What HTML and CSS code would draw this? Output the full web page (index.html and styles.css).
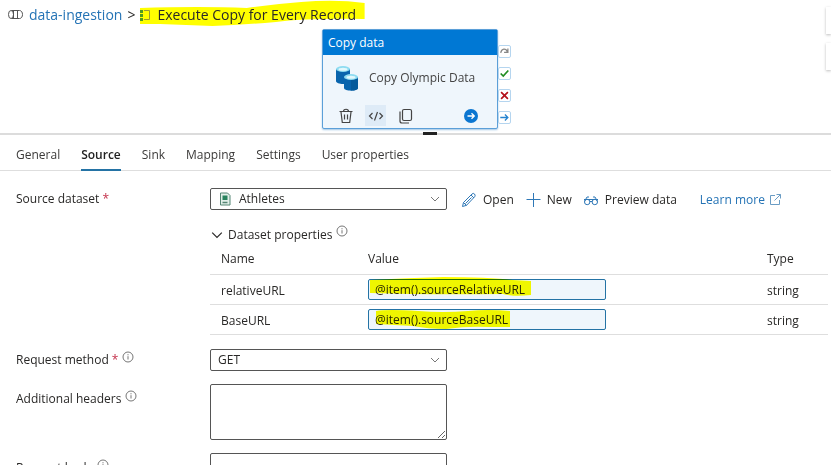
FILE: index.html
```html
<!DOCTYPE html>
<html lang="en">
<head>
<meta charset="utf-8">
<meta name="viewport" content="width=device-width, initial-scale=1">
<title>data-ingestion</title>
<link rel="stylesheet" href="styles.css">
</head>
<body>
<svg class="sprite" aria-hidden="true">
  <symbol id="chevron" viewBox="0 0 10 10"><path d="M1 3l4 4 4-4" fill="none" stroke="currentColor"/></symbol>
  <symbol id="info" viewBox="0 0 12 12"><circle cx="6" cy="6" r="5" fill="none" stroke="#666" stroke-width=".9"/><path d="M6 5.200v3.300M6 3.200v1.100" stroke="#666" stroke-width=".9"/></symbol>
</svg>

<section class="canvas">
  <nav class="breadcrumb" aria-label="Breadcrumb">
    <svg class="crumb-icon" width="15" height="12" viewBox="0 0 15 12" fill="none" stroke="#555"><path d="M3.500 1.500h8c4 0 4 8 0 8h-8M5.500 1.500v8M9.500 1.500v8"/><ellipse cx="3" cy="5.500" rx="2.500" ry="4"/></svg>
    <a href="#pipeline">data-ingestion</a>
    <span class="separator">&gt;</span>
    <span class="current">
      <svg class="marker" viewBox="0 0 224 26" preserveAspectRatio="none" aria-hidden="true"><path d="M0 8Q60 6 106 8Q134 4 160 2Q195-1 223 3V19Q165 18 135 22Q100 25 72 26L20 24H0z" fill="#ff0"/></svg>
      <svg class="loop-icon" width="11" height="13" viewBox="0 0 11 13"><path d="M4 1.500h5.500v9H4" fill="none" stroke="#999a35"/><path d="M0 1h3v3H0zM0 5h3v3H0zM0 9h3v3H0z" fill="#4f9a21"/></svg>
      <span class="current-label">Execute Copy for Every Record</span>
    </span>
  </nav>

  <article class="activity">
    <header class="activity-type">Copy data</header>
    <div class="activity-main">
      <svg width="24" height="26" viewBox="0 0 24 26"><path d="M1 4v12c0 4 14 4 14 0V4z" fill="#0864ad"/><ellipse cx="8" cy="4" rx="7" ry="3" fill="#8edcf1"/><ellipse cx="8" cy="4.200" rx="4.500" ry="1.500" fill="#e2f8fc"/><path d="M9 12v11c0 3.500 14 3.500 14 0V12z" fill="#0864ad"/><path d="M16 14h7v9c0 1.500-3 2.600-7 2.600z" fill="#055a9b"/><ellipse cx="16" cy="12" rx="7" ry="3" fill="#8edcf1"/><ellipse cx="16" cy="12.200" rx="4.500" ry="1.500" fill="#e2f8fc"/></svg>
      <span>Copy Olympic Data</span>
    </div>
    <div class="activity-actions">
      <button type="button" aria-label="Delete"><svg width="16" height="16" viewBox="0 0 16 16" fill="none" stroke="#444" stroke-width="1.200"><path d="M1.500 3.500h13M5.500 3.500C5.500.5 10.500.5 10.500 3.500M3 4l1.300 10.500h7.400L13 4M6.500 6.500v5M9.500 6.500v5"/></svg></button>
      <button type="button" class="code" aria-label="Code"><svg width="16" height="16" viewBox="0 0 16 16" fill="none" stroke="#444" stroke-width="1.200"><path d="M4.500 5L1.500 8l3 3M11.500 5l3 3-3 3M9.500 4l-3 8.500"/></svg></button>
      <button type="button" aria-label="Clone"><svg width="16" height="16" viewBox="0 0 16 16" fill="none" stroke="#444" stroke-width="1.200"><rect x="4.500" y="1.500" width="9" height="11" rx="1.500"/><path d="M2 3.500V13q0 2 2 2h7"/></svg></button>
      <button type="button" class="run" aria-label="Add output"><svg width="16" height="16" viewBox="0 0 16 16"><circle cx="8" cy="8" r="7" fill="#0b76d1"/><path d="M4.500 8h6.500M8.500 5.200L11.300 8l-2.800 2.800" fill="none" stroke="#fff" stroke-width="1.300"/></svg></button>
    </div>
    <div class="ports">
      <svg viewBox="0 0 13 13"><path d="M2 8C3 3 8 2 10 7M10.500 3v4.500H6" fill="none" stroke="#888" stroke-width="1.500"/></svg>
      <svg viewBox="0 0 13 13"><path d="M2 6.500l3 3 6-6.500" fill="none" stroke="#218c21" stroke-width="2"/></svg>
      <svg viewBox="0 0 13 13"><path d="M2.500 2.500l8 8M10.500 2.500l-8 8" fill="none" stroke="#b5121b" stroke-width="2"/></svg>
      <svg viewBox="0 0 13 13"><path d="M1.500 6.500h9M7 3l3.500 3.500L7 10" fill="none" stroke="#2583cf" stroke-width="1.500"/></svg>
    </div>
  </article>

  <div class="canvas-tools"><span></span><span></span></div>
  <div class="grip"></div>
</section>

<nav class="tabs" aria-label="Activity settings">
  <a href="#general">General</a>
  <a href="#source" class="active" aria-current="page">Source</a>
  <a href="#sink">Sink</a>
  <a href="#mapping">Mapping</a>
  <a href="#settings">Settings</a>
  <a href="#user">User properties</a>
</nav>

<form class="settings">
  <div class="row">
    <label for="dataset">Source dataset <span class="required">*</span></label>
    <div class="dataset-line">
      <div class="picker with-icon">
        <svg class="file-icon" width="12" height="14" viewBox="0 0 12 14"><path d="M1.500 1h7L11 3.500V13H1.500z" fill="#e2efe9" stroke="#558674"/><rect x="3.500" y="3.500" width="5" height="4.500" fill="#28835e"/><path d="M3.500 10.500h5" stroke="#558674" stroke-width="1.500"/></svg>
        <select id="dataset"><option>Athletes</option></select>
        <svg class="chevron"><use href="#chevron"/></svg>
      </div>
      <div class="commands">
        <button type="button"><svg width="16" height="16" viewBox="0 0 16 16" fill="none" stroke="#2f78b7"><path d="M1.500 14.500l1-4L11 2q1.300-1.300 2.500 0t.2 2.700L5.500 13.300zM10 3l3 3M2.500 10.500l3 3M4.500 11.500l6-6"/></svg>Open</button>
        <button type="button"><svg width="16" height="16" viewBox="0 0 16 16"><path d="M8.500 1v14M1.500 7.500h14" stroke="#2f78b7"/></svg>New</button>
        <button type="button"><svg width="16" height="16" viewBox="0 0 16 16" fill="none" stroke="#2f78b7"><circle cx="4.200" cy="10" r="2.700"/><circle cx="11.800" cy="10" r="2.700"/><path d="M7 9.500h2M1.500 9.500L4 5h2M14.500 9.500L12 5h-2M1 7.500h14"/></svg>Preview data</button>
        <a href="#learn">Learn more<svg width="12" height="12" viewBox="0 0 12 12" fill="none" stroke="#6a9cc4"><path d="M6 1.500H1.500v9h9V6M7.500.5h4v4M11.500.5l-6 6"/></svg></a>
      </div>
    </div>
  </div>

  <div class="row">
    <div class="dataset-properties">
      <h2><button type="button"><svg class="fold"><use href="#chevron"/></svg>Dataset properties</button><svg class="info"><use href="#info"/></svg></h2>
      <table>
        <thead><tr><th class="name">Name</th><th>Value</th><th class="type">Type</th></tr></thead>
        <tbody>
          <tr>
            <td><label for="relative">relativeURL</label></td>
            <td class="value"><div class="expression"><input id="relative" type="text" value="@item().sourceRelativeURL"><svg class="marker" width="164" height="22" viewBox="0 0 164 22" aria-hidden="true"><path d="M2 3Q40 1 75 0Q120 0 145 3L163 4V18Q145 20 135 17Q60 18 2 16z" fill="#ff0"/></svg></div></td>
            <td>string</td>
          </tr>
          <tr>
            <td><label for="base">BaseURL</label></td>
            <td class="value"><div class="expression"><input id="base" type="text" value="@item().sourceBaseURL"><svg class="marker" width="164" height="22" viewBox="0 0 164 22" aria-hidden="true"><path d="M8 4Q20 2 50 4Q75 6 100 4Q120 2 142 4V20H120Q100 19 78 22Q60 22 45 19L8 17z" fill="#ff0"/></svg></div></td>
            <td>string</td>
          </tr>
        </tbody>
      </table>
    </div>
  </div>

  <div class="row">
    <label for="method">Request method <span class="required">*</span><svg class="info"><use href="#info"/></svg></label>
    <div class="picker">
      <select id="method"><option>GET</option></select>
      <svg class="chevron"><use href="#chevron"/></svg>
    </div>
  </div>
  <div class="row area-row">
    <label for="headers">Additional headers<svg class="info"><use href="#info"/></svg></label>
    <textarea id="headers"></textarea>
  </div>
  <div class="row area-row">
    <label for="body">Request body<svg class="info"><use href="#info"/></svg></label>
    <textarea id="body"></textarea>
  </div>
</form>
</body>
</html>
```
FILE: styles.css
```css
* { box-sizing: border-box; }

body {
  margin: 0;
  height: 100vh;
  overflow: hidden;
  background: #fff;
  color: #292827;
  font: 12px/20px "Open Sans", "Noto Sans", sans-serif;
}

button, input, select, textarea { font: inherit; color: inherit; margin: 0; }
button { border: 0; padding: 0; background: none; display: inline-flex; align-items: center; }
a { color: #2473b5; text-decoration: none; }
svg { flex: none; }
.sprite { position: absolute; width: 0; height: 0; }

/* Pipeline canvas */
.canvas {
  position: relative;
  height: 135px;
  border-bottom: 2px solid #dcdcdc;
}

.breadcrumb {
  display: flex;
  align-items: center;
  height: 30px;
  padding-left: 8px;
  font-size: 14px;
}
.crumb-icon { margin-right: 6px; }
.separator { margin: 0 5px; }
.current {
  position: relative;
  display: flex;
  align-items: center;
  gap: 6px;
  padding-right: 10px;
}
.marker { position: absolute; mix-blend-mode: multiply; pointer-events: none; }
.current .marker { left: 0; top: -5px; width: 100%; height: 26px; }
.loop-icon, .current-label { position: relative; }

.activity {
  position: absolute;
  left: 322px;
  top: 29px;
  width: 176px;
  height: 100px;
  background: #eff6fc;
  border: 1px solid #5b9fd8;
  border-radius: 2px;
  box-shadow: 0 1px 2px #9fc5e5;
}
.activity-type {
  height: 25px;
  padding-left: 5px;
  background: #0078d4;
  color: #fff;
  font-weight: 500;
  line-height: 26px;
}
.activity-main {
  display: flex;
  align-items: center;
  gap: 10px;
  height: 50px;
  padding: 0 0 4px 12px;
  color: #444;
}
.activity-actions {
  display: flex;
  align-items: center;
  gap: 9px;
  padding: 0 18px 0 12px;
}
.activity-actions button { width: 21px; height: 21px; justify-content: center; }
.activity-actions .code { background: #deebf7; }
.activity-actions .run { width: 16px; margin-left: auto; }
.ports {
  position: absolute;
  left: 175px;
  top: 15px;
  display: flex;
  flex-direction: column;
  gap: 9px;
}
.ports svg {
  width: 13px;
  height: 13px;
  background: #fff;
  border: 1px solid #b5d5ef;
  border-radius: 2px;
}
.canvas-tools {
  position: absolute;
  right: 0;
  top: 7px;
  display: grid;
  gap: 9px;
}
.canvas-tools span { width: 5px; height: 27px; background: #fff; box-shadow: 0 1px 3px #bbb; }
.grip {
  position: absolute;
  left: 423px;
  bottom: -2px;
  width: 14px;
  height: 3px;
  background: #222;
}

/* Tabs */
.tabs {
  display: flex;
  gap: 21px;
  height: 36px;
  padding-left: 16px;
  border-bottom: 1px solid #dedede;
}
.tabs a {
  height: 36px;
  color: #3b3a39;
  line-height: 39px;
}
.tabs .active {
  color: #222;
  font-weight: 600;
  border-bottom: 2px solid #2473a5;
}

/* Settings form */
.settings { padding: 17px 3px 0 16px; }
.row { display: grid; grid-template-columns: 194px minmax(0, 1fr); }
.row > label { padding-top: 1px; font-weight: 500; }
.row.area-row { margin-top: 13px; }
.area-row > label { padding-top: 5px; }
.required { color: #c4314b; }
.info { width: 12px; height: 12px; margin-left: 4px; vertical-align: 1px; }

.picker { position: relative; width: 237px; height: 22px; }
select, textarea {
  display: block;
  width: 237px;
  border: 1px solid #555;
  border-radius: 2px;
  background: #fff;
}
select { height: 22px; padding: 0 7px; appearance: none; }
.with-icon select { padding-left: 28px; }
.file-icon { position: absolute; left: 9px; top: 4px; }
.chevron {
  position: absolute;
  right: 7px;
  top: 6px;
  width: 10px;
  height: 10px;
  color: #777;
  pointer-events: none;
}
textarea { height: 56px; }

.dataset-line { display: flex; align-items: center; }
.commands { display: flex; gap: 11px; margin-left: 14px; padding-top: 1px; }
.commands button { gap: 6px; }
.commands a { display: flex; align-items: center; gap: 4px; margin-left: 12px; }

.dataset-properties { grid-column: 2; }
h2 { display: flex; height: 36px; margin: 0; padding-top: 15px; font-size: 12px; font-weight: 500; }
h2 button { height: 20px; gap: 5px; padding-left: 1px; }
.fold { width: 12px; height: 12px; }

table {
  width: 100%;
  margin-bottom: 14px;
  border-collapse: collapse;
  table-layout: fixed;
}
th, td { height: 30px; padding: 3px 0 0; border-bottom: 1px solid #dedede; text-align: left; }
th { height: 28px; padding: 0 0 2px; font-weight: 500; }
th:first-child, td:first-child { padding-left: 11px; }
td.value { padding: 0; }
.name { width: 158px; }
.type { width: 61px; }
.expression { position: relative; width: 238px; height: 21px; }
.expression input {
  display: block;
  width: 100%;
  height: 21px;
  padding: 0 6px;
  background: #eff6fc;
  border: 1px solid #2473a5;
  border-radius: 2px;
  font-weight: 500;
}
.expression .marker { left: 0; top: -2px; }
```
